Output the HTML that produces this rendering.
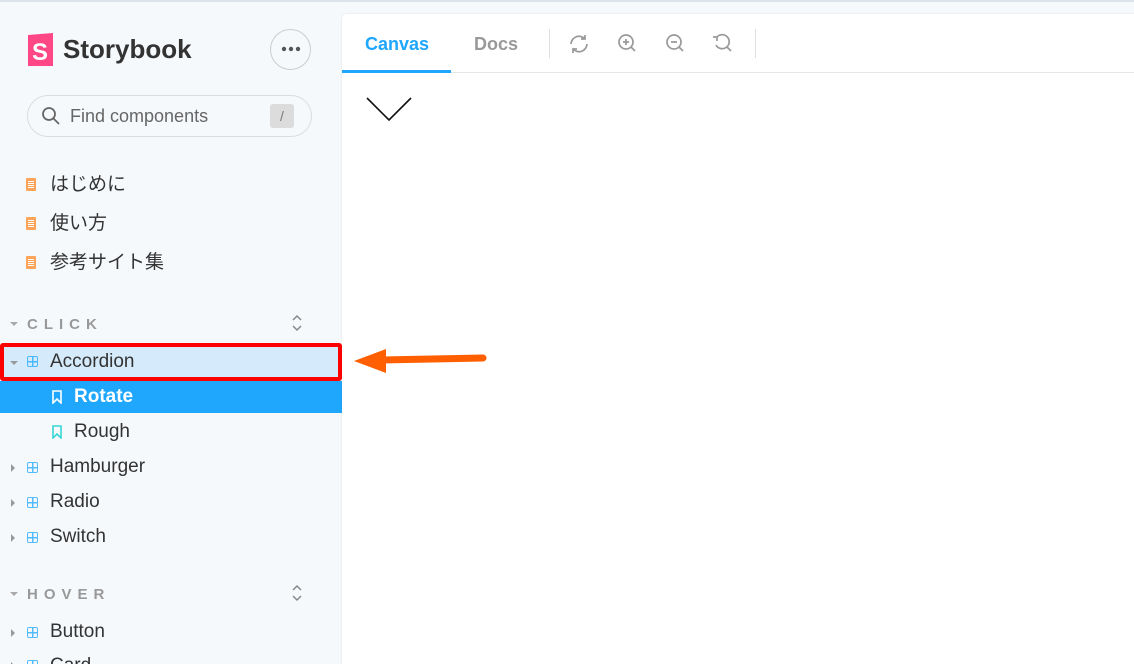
<!DOCTYPE html><html><head><meta charset="utf-8"><style>
html,body{margin:0;width:1134px;height:664px;overflow:hidden}
body{background:#f6f9fc;font-family:"Liberation Sans","Noto Sans CJK JP",sans-serif;position:relative}
.abs{position:absolute}
.t{position:absolute;font-size:19px;color:#333;line-height:20px}
.doc{position:absolute;left:26px;width:10px;height:13px;background:#fca45a;border-radius:1px}
.doc:after{content:"";position:absolute;left:2px;top:3px;width:6px;height:7px;background:repeating-linear-gradient(#fff 0 1px,#fca45a 1px 2px)}
.grid{position:absolute;left:27px;width:11px;height:11px;border:1.5px solid #1ea7fd;border-radius:2px;box-sizing:border-box;background:linear-gradient(#1ea7fd,#1ea7fd) center/1.5px 100% no-repeat,linear-gradient(#1ea7fd,#1ea7fd) center/100% 1.5px no-repeat;opacity:.75}
.car{position:absolute;left:11px;width:0;height:0;border-top:4px solid transparent;border-bottom:4px solid transparent;border-left:4px solid #999}
.sec{position:absolute;left:27px;font-size:15px;font-weight:bold;letter-spacing:6px;color:#999}
</style></head><body>
<div class="abs" style="left:0;top:0;width:1134px;height:2px;background:#dde3ea"></div>
<svg class="abs" style="left:27px;top:33px" width="27" height="34" viewBox="0 0 27 34"><path d="M1 2 L26 0 L26 33 L1 33Z" fill="#ff4785"/><text x="13" y="27" font-family="Liberation Sans" font-weight="bold" font-size="24" fill="#fff" text-anchor="middle">S</text></svg>
<div class="abs" style="left:63px;top:34px;font-size:26px;font-weight:bold;color:#333">Storybook</div>
<div class="abs" style="left:270px;top:29px;width:41px;height:41px;border:1.5px solid #ccc;border-radius:50%;box-sizing:border-box"></div>
<svg class="abs" style="left:280px;top:46px" width="22" height="6"><circle cx="4" cy="3" r="2.2" fill="#555"/><circle cx="11" cy="3" r="2.2" fill="#555"/><circle cx="18" cy="3" r="2.2" fill="#555"/></svg>
<div class="abs" style="left:27px;top:95px;width:285px;height:42px;border:1.5px solid #dcdcdc;border-radius:21px;box-sizing:border-box"></div>
<svg class="abs" style="left:41px;top:106px" width="20" height="20"><circle cx="8" cy="8" r="6" stroke="#666" stroke-width="1.8" fill="none"/><line x1="12.5" y1="12.5" x2="18" y2="18" stroke="#666" stroke-width="1.8"/></svg>
<div class="abs" style="left:70px;top:106px;font-size:18px;color:#666">Find components</div>
<div class="abs" style="left:270px;top:104px;width:24px;height:24px;background:#dcdcdc;border-radius:3px;text-align:center;line-height:24px;color:#777;font-size:14px">/</div>
<div class="doc" style="top:178px"></div><div class="t" style="left:50px;top:175px">はじめに</div>
<div class="doc" style="top:217px"></div><div class="t" style="left:50px;top:214px">使い方</div>
<div class="doc" style="top:256px"></div><div class="t" style="left:50px;top:253px">参考サイト集</div>
<div class="abs" style="left:10px;top:322px;border-left:4px solid transparent;border-right:4px solid transparent;border-top:4px solid #aaa"></div>
<div class="sec" style="top:316px">CLICK</div>
<svg class="abs" style="left:291px;top:314px" width="12" height="18" fill="none" stroke="#888" stroke-width="1.5"><path d="M2 6L6 2L10 6M2 12L6 16L10 12"/></svg>
<div class="abs" style="left:0;top:343px;width:342px;height:38px;border:4px solid #f00;border-radius:3px;box-sizing:border-box;background:#d5eafb"></div>
<div class="abs" style="left:10px;top:361px;border-left:4px solid transparent;border-right:4px solid transparent;border-top:4px solid #999"></div>
<div class="grid" style="top:356px"></div><div class="t" style="left:50px;top:352px">Accordion</div>
<div class="abs" style="left:0;top:381px;width:342px;height:32px;background:#1ea7fd"></div>
<svg class="abs" style="left:52px;top:390px" width="10" height="14"><path d="M1 1H9V13L5 9L1 13Z" fill="none" stroke="#fff" stroke-width="1.6"/></svg>
<div class="t" style="left:74px;top:387px;color:#fff;font-weight:bold">Rotate</div>
<svg class="abs" style="left:52px;top:425px" width="10" height="14"><path d="M1 1H9V13L5 9L1 13Z" fill="none" stroke="#37d5d3" stroke-width="1.6"/></svg>
<div class="t" style="left:74px;top:422px">Rough</div>
<div class="car" style="top:464px"></div><div class="grid" style="top:462px"></div><div class="t" style="left:50px;top:457px">Hamburger</div>
<div class="car" style="top:499px"></div><div class="grid" style="top:497px"></div><div class="t" style="left:50px;top:492px">Radio</div>
<div class="car" style="top:534px"></div><div class="grid" style="top:532px"></div><div class="t" style="left:50px;top:527px">Switch</div>
<div class="abs" style="left:10px;top:592px;border-left:4px solid transparent;border-right:4px solid transparent;border-top:4px solid #aaa"></div>
<div class="sec" style="top:586px">HOVER</div>
<svg class="abs" style="left:291px;top:584px" width="12" height="18" fill="none" stroke="#888" stroke-width="1.5"><path d="M2 6L6 2L10 6M2 12L6 16L10 12"/></svg>
<div class="car" style="top:629px"></div><div class="grid" style="top:627px"></div><div class="t" style="left:50px;top:622px">Button</div>
<div class="car" style="top:662px"></div><div class="grid" style="top:660px"></div><div class="t" style="left:50px;top:656px">Card</div>
<div class="abs" style="left:342px;top:14px;width:800px;height:660px;background:#fff;border-top-left-radius:5px;box-shadow:0 0 2px rgba(0,0,0,.1)"></div>
<div class="abs" style="left:342px;top:72px;width:792px;height:1px;background:#e6e6e6"></div>
<div class="abs" style="left:342px;top:70px;width:109px;height:3px;background:#1ea7fd"></div>
<div class="abs" style="left:365px;top:34px;font-size:18px;font-weight:bold;color:#1ea7fd">Canvas</div>
<div class="abs" style="left:474px;top:34px;font-size:18px;font-weight:bold;color:#999">Docs</div>
<div class="abs" style="left:549px;top:29px;width:1px;height:29px;background:#e0e0e0"></div>
<div class="abs" style="left:755px;top:29px;width:1px;height:29px;background:#e0e0e0"></div>
<svg class="abs" style="left:568px;top:33px" width="170" height="22" fill="none" stroke="#999" stroke-width="1.7">
<path d="M3 11A8 8 0 0 1 17 6M19 11A8 8 0 0 1 5 16M17 2V6H13M5 20V16H9"/>
<circle cx="58" cy="9" r="7"/><path d="M63 14L67 18M55 9H61M58 6V12"/>
<circle cx="106" cy="9" r="7"/><path d="M111 14L115 18M103 9H109"/>
<path d="M149 4A7 7 0 1 1 148 12M149 4V8M149 4H145M159 14L163 18"/>
</svg>
<svg class="abs" style="left:366px;top:96px" width="48" height="27"><path d="M1 2L23 24L45 2" fill="none" stroke="#111" stroke-width="1.6"/></svg>
<svg class="abs" style="left:350px;top:344px" width="145" height="34"><path d="M30 16L133 14" stroke="#ff5f00" stroke-width="7" stroke-linecap="round"/><path d="M4 17L36 5L36 29Z" fill="#ff5f00"/></svg>
</body></html>
